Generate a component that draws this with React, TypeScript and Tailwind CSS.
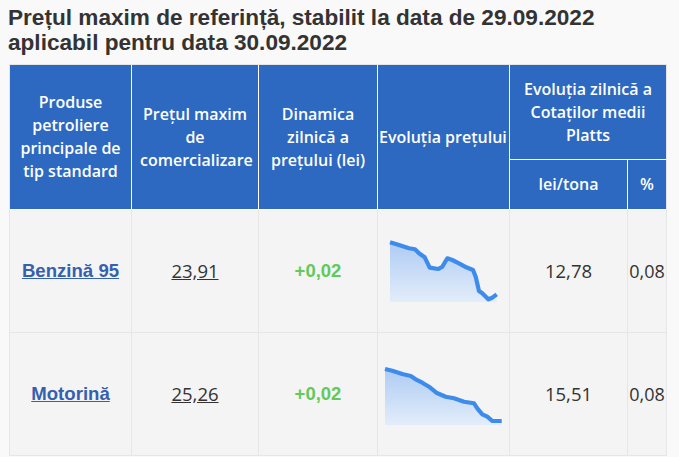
import React from "react";

const p1: [number, number][] = [
  [391, 242.3], [400, 245], [410, 248.3], [416, 249.3], [420, 253.3], [425.7, 257.3],
  [430.7, 267.7], [439.3, 269], [443.3, 266.7], [448.3, 258.3], [453.3, 260], [460, 263.3],
  [467.3, 267.3], [474, 270], [476.7, 276.7], [480, 291], [483.3, 293.3], [489.3, 299.3],
  [493.3, 297.7], [497.7, 294.3],
];
const p2: [number, number][] = [
  [386, 369], [393.3, 370.7], [403.3, 374], [411.7, 376], [416.7, 379.3], [423.3, 382.7],
  [430, 386.7], [437.3, 392.7], [446.7, 396.7], [455, 398.3], [465, 401.7], [475, 403.3],
  [478.3, 408.3], [483.3, 414.3], [488.3, 416.7], [493.3, 421], [502.7, 421],
];

function Spark({ pts, bottom, vb, w, h, id }: { pts: [number, number][]; bottom: number; vb: string; w: number; h: number; id: string }) {
  const line = pts.map((p) => p.join(",")).join(" ");
  const first = pts[0];
  const last = pts[pts.length - 1];
  const area = `${first[0]},${bottom} ${line} ${last[0]},${bottom}`;
  const top = Math.min(...pts.map((p) => p[1]));
  return (
    <svg width={w} height={h} viewBox={vb}>
      <defs>
        <linearGradient id={id} x1="0" y1={top} x2="0" y2={bottom} gradientUnits="userSpaceOnUse">
          <stop offset="0" stopColor="#aecbf3" />
          <stop offset="1" stopColor="#e3edfa" />
        </linearGradient>
      </defs>
      <polygon points={area} fill={`url(#${id})`} />
      <polyline points={line} fill="none" stroke="#3d8cec" strokeWidth="4.2" strokeLinejoin="round" strokeLinecap="butt" />
    </svg>
  );
}

const th = "bg-[#2d69c0] text-white font-semibold text-[16px] leading-[23px] text-center align-middle p-0 border-white";
const td = "bg-[#f4f4f4] border-[#e6e6e6] text-center align-middle p-0";
const arial = { fontFamily: '"Liberation Sans", Arial, sans-serif' };

export default function App() {
  return (
    <div className="w-full min-h-screen bg-[#f9f9f9] overflow-hidden" style={{ fontFamily: '"Open Sans", sans-serif' }}>
      <h1 className="pl-[8px] pt-[5px] text-[22.6px] leading-[25px] font-bold text-[#333333]" style={arial}>
        Prețul maxim de referință, stabilit la data de 29.09.2022
        <br />
        aplicabil pentru data 30.09.2022
      </h1>
      <div className="ml-[9px] mt-[9px] w-[658px] border border-[#e6e6e6]">
        <table className="w-[656px] table-fixed border-separate border-spacing-0">
          <colgroup>
            <col className="w-[122px]" />
            <col className="w-[127px]" />
            <col className="w-[119px]" />
            <col className="w-[132px]" />
            <col className="w-[118px]" />
            <col className="w-[38px]" />
          </colgroup>
          <thead>
            <tr>
              <th rowSpan={2} className={`${th} border-r border-b px-[8px]`}>
                Produse petroliere principale de tip standard
              </th>
              <th rowSpan={2} className={`${th} border-r border-b px-[8px]`}>
                Prețul maxim de comercializare
              </th>
              <th rowSpan={2} className={`${th} border-r border-b px-[8px]`}>
                Dinamica zilnică a prețului (lei)
              </th>
              <th rowSpan={2} className={`${th} border-r border-b pl-[1px] pr-0`}>
                <div className="whitespace-nowrap overflow-hidden text-left">Evoluția prețului</div>
              </th>
              <th colSpan={2} className={`${th} border-b h-[95px] px-[8px]`}>
                Evoluția zilnică a Cotaților medii Platts
              </th>
            </tr>
            <tr>
              <th className={`${th} border-r border-b h-[50px]`}>lei/tona</th>
              <th className={`${th} border-b h-[50px]`}>%</th>
            </tr>
          </thead>
          <tbody>
            <tr>
              <td className={`${td} border-r border-b h-[123px]`}>
                <a href="#" className="underline text-[#3560b0] text-[18.6px] font-bold" style={arial}>
                  Benzină 95
                </a>
              </td>
              <td className={`${td} border-r border-b`}>
                <span className="underline text-[#333333] text-[18.5px]">23,91</span>
              </td>
              <td className={`${td} border-r border-b`}>
                <span className="text-[#62c95a] text-[18.5px] font-bold" style={arial}>+0,02</span>
              </td>
              <td className={`${td} border-r border-b`}>
                <div className="flex justify-center items-center">
                  <Spark id="g1" pts={p1} bottom={302} vb="389 239 111 64" w={111} h={64} />
                </div>
              </td>
              <td className={`${td} border-r border-b text-[18.5px] text-[#333333]`}>12,78</td>
              <td className={`${td} border-b text-[18px] text-[#333333]`}>
                <div className="whitespace-nowrap">0,08</div>
              </td>
            </tr>
            <tr>
              <td className={`${td} border-r h-[122px]`}>
                <a href="#" className="underline text-[#3560b0] text-[18.6px] font-bold" style={arial}>
                  Motorină
                </a>
              </td>
              <td className={`${td} border-r`}>
                <span className="underline text-[#333333] text-[18.5px]">25,26</span>
              </td>
              <td className={`${td} border-r`}>
                <span className="text-[#62c95a] text-[18.5px] font-bold" style={arial}>+0,02</span>
              </td>
              <td className={`${td} border-r`}>
                <div className="flex justify-center items-center mt-[5px]">
                  <Spark id="g2" pts={p2} bottom={425} vb="384 366 121 61" w={121} h={61} />
                </div>
              </td>
              <td className={`${td} border-r text-[18.5px] text-[#333333]`}>15,51</td>
              <td className={`${td} text-[18px] text-[#333333]`}>
                <div className="whitespace-nowrap">0,08</div>
              </td>
            </tr>
          </tbody>
        </table>
      </div>
    </div>
  );
}
